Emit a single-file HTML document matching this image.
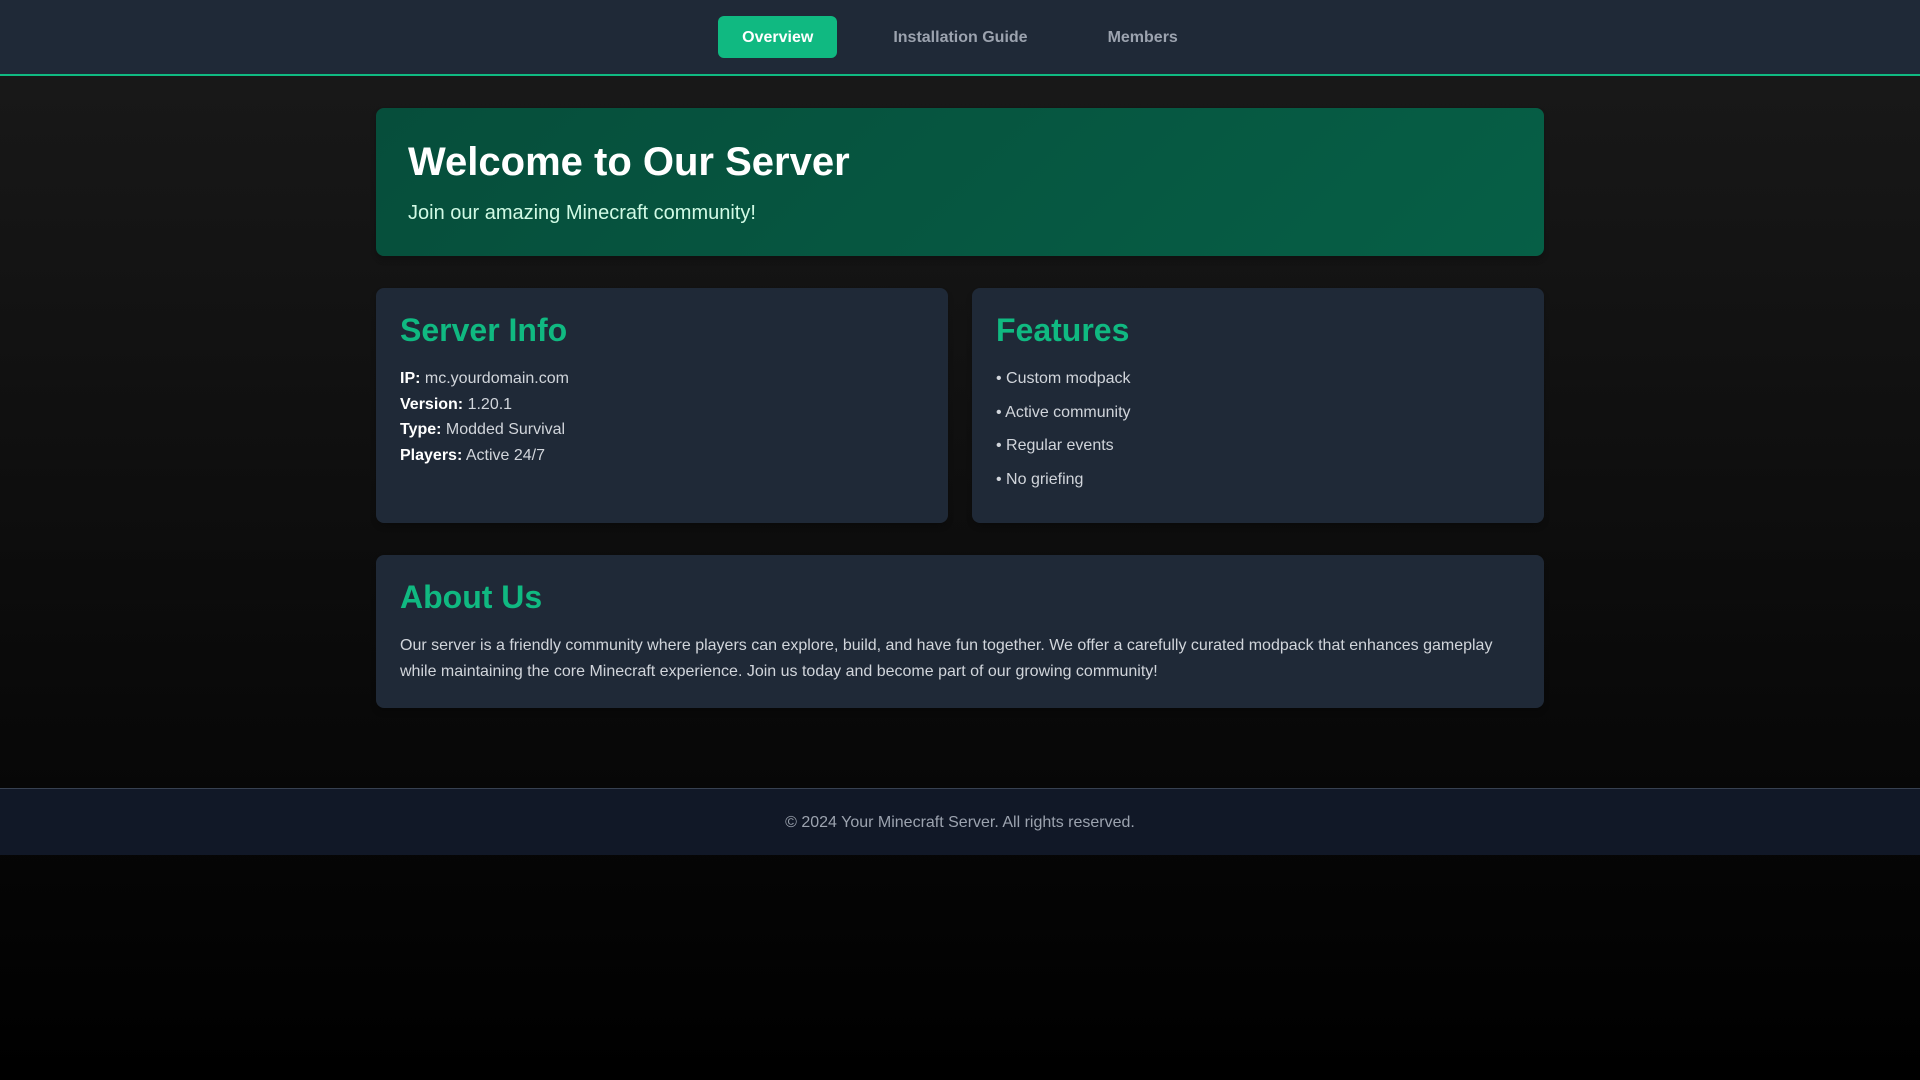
<!DOCTYPE html>
<html lang="en">
<head>
<meta charset="utf-8">
<title>Minecraft Server</title>
<style>
*{margin:0;padding:0;box-sizing:border-box}
html,body{height:1080px;overflow:hidden}
body{font-family:"Liberation Sans",Arial,sans-serif;line-height:1.6;color:#d1d5db;background:linear-gradient(180deg,#1a1a1a 0%,#000 100%)}
nav{height:76px;background:#1f2937;border-bottom:2px solid #10b981;display:flex;justify-content:center;align-items:flex-start;gap:32px;padding-top:16px}
nav a{display:block;padding:9px 24px 7px;border-radius:6px;font-weight:700;font-size:16px;color:#9ca3af;text-decoration:none}
nav a.on{background:#10b981;color:#fff}
main{width:1168px;margin:0 auto;padding-top:32px}
.hero{height:148px;border-radius:8px;padding:32px;background:linear-gradient(135deg,#064e3b,#065f46);box-shadow:0 4px 6px rgba(0,0,0,.2);margin-bottom:32px}
.hero h1{font-size:40px;line-height:44px;color:#fff;margin-bottom:13px}
.hero p{font-size:20px;line-height:32px;color:#d1fae5}
.grid{display:grid;grid-template-columns:572px 572px;gap:24px;margin-bottom:32px}
.card{background:#1f2937;border-radius:8px;padding:24px;box-shadow:0 4px 6px rgba(0,0,0,.2)}
.grid .card{height:235px}
.about{height:153px}
h2{font-size:32px;line-height:37px;color:#10b981;margin-bottom:17px}
.card strong{color:#fff}
li{list-style:none;margin-bottom:8px}
footer{position:absolute;left:0;right:0;top:788px;height:67px;background:#111827;border-top:1px solid #374151;text-align:center;padding-top:21px;color:#9ca3af;font-size:16px}
</style>
</head>
<body>
<nav>
<a class="on" href="#">Overview</a>
<a href="#">Installation Guide</a>
<a href="#">Members</a>
</nav>
<main>
<section class="hero">
<h1>Welcome to Our Server</h1>
<p>Join our amazing Minecraft community!</p>
</section>
<div class="grid">
<section class="card">
<h2>Server Info</h2>
<p><strong>IP:</strong> mc.yourdomain.com</p>
<p><strong>Version:</strong> 1.20.1</p>
<p><strong>Type:</strong> Modded Survival</p>
<p><strong>Players:</strong> Active 24/7</p>
</section>
<section class="card">
<h2>Features</h2>
<ul>
<li>• Custom modpack</li>
<li>• Active community</li>
<li>• Regular events</li>
<li>• No griefing</li>
</ul>
</section>
</div>
<section class="card about">
<h2>About Us</h2>
<p>Our server is a friendly community where players can explore, build, and have fun together. We offer a carefully curated modpack that enhances gameplay while maintaining the core Minecraft experience. Join us today and become part of our growing community!</p>
</section>
</main>
<footer>© 2024 Your Minecraft Server. All rights reserved.</footer>
</body>
</html>
